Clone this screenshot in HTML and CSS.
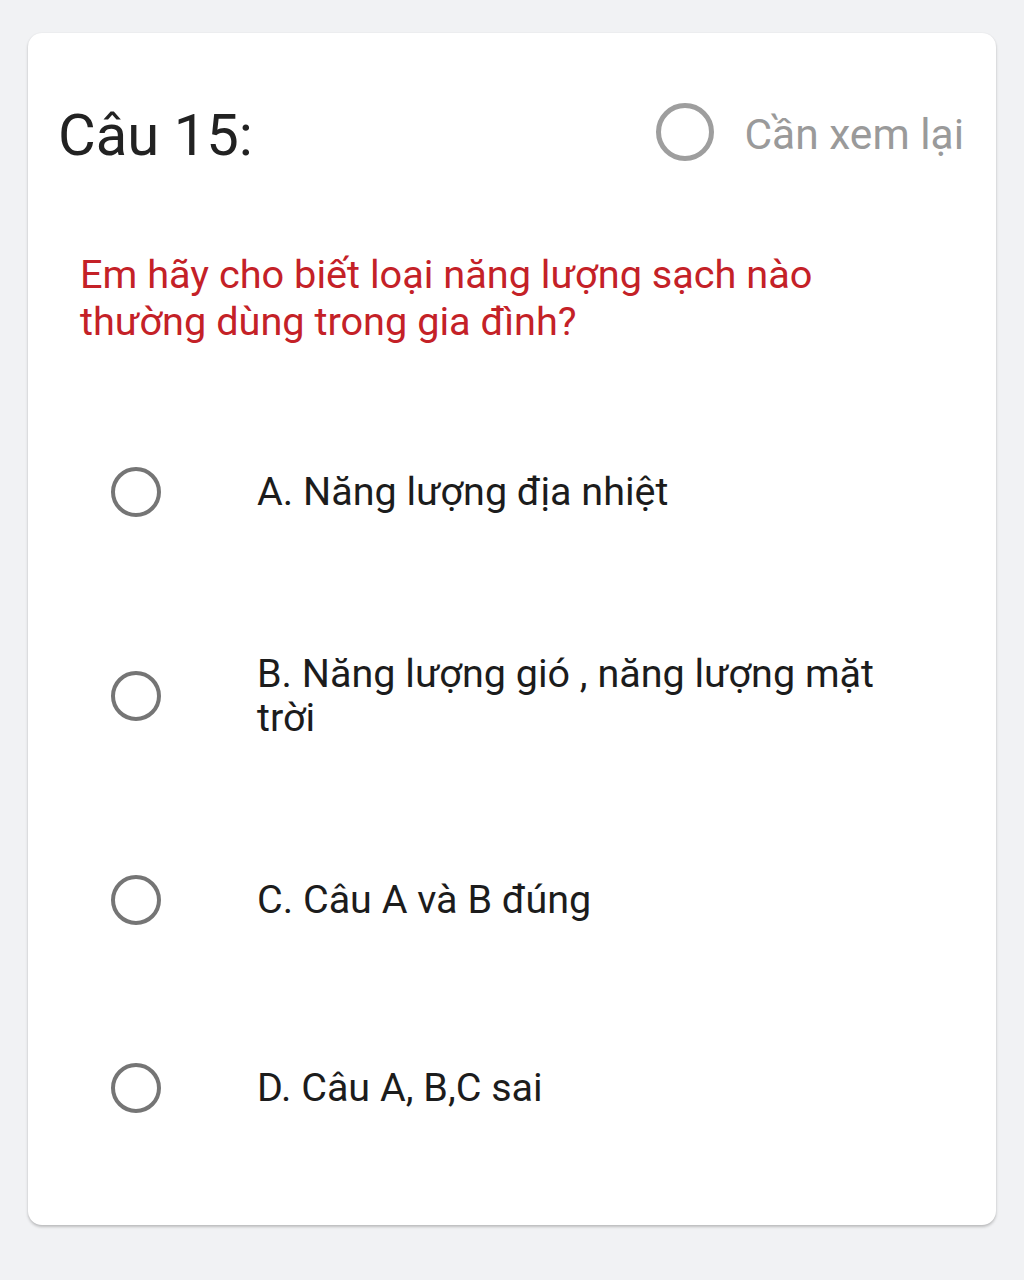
FILE: index.html
```html
<!DOCTYPE html>
<html lang="vi">
<head>
<meta charset="utf-8">
<title>Câu 15</title>
<link rel="stylesheet" href="styles.css">
</head>
<body>
<div class="card">
  <div class="header">
    <div class="title">Câu 15:</div>
    <div class="review">
      <span class="review-circle"></span>
      <span class="review-text">Cần xem lại</span>
    </div>
  </div>
  <div class="question">Em hãy cho biết loại năng lượng sạch nào thường dùng trong gia đình?</div>
  <div class="options">
    <div class="option">
      <span class="radio"></span>
      <span class="option-text">A. Năng lượng địa nhiệt</span>
    </div>
    <div class="option">
      <span class="radio"></span>
      <span class="option-text">B. Năng lượng gió , năng lượng mặt trời</span>
    </div>
    <div class="option">
      <span class="radio"></span>
      <span class="option-text">C. Câu A và B đúng</span>
    </div>
    <div class="option option-last">
      <span class="radio"></span>
      <span class="option-text">D. Câu A, B,C sai</span>
    </div>
  </div>
</div>
</body>
</html>
```
FILE: styles.css
```css
html, body {
  margin: 0;
  padding: 0;
  background: #f1f2f4;
}
body {
  font-family: Roboto, "Noto Sans", "Liberation Sans", sans-serif;
  padding: 33px 28px 0;
  height: 1280px;
  box-sizing: border-box;
}
.card {
  background: #ffffff;
  border-radius: 14px;
  height: 1192px;
  box-sizing: border-box;
  padding: 72px 32px 0 30px;
  box-shadow: 0 2px 3px rgba(0, 0, 0, 0.22), 0 0 2px rgba(0, 0, 0, 0.06);
}
.header {
  display: flex;
  justify-content: space-between;
  align-items: center;
  height: 60px;
}
.title {
  font-size: 58px;
  color: #222222;
  line-height: 60px;
}
.review {
  display: flex;
  align-items: center;
  gap: 30px;
}
.review-circle {
  width: 58px;
  height: 58px;
  box-sizing: border-box;
  border: 5px solid #9e9e9e;
  border-radius: 50%;
  margin-bottom: 6px;
}
.review-text {
  font-size: 42.5px;
  color: #9a9a9a;
  line-height: 60px;
}
.question {
  margin-top: 86px;
  padding-left: 22px;
  max-width: 770px;
  font-size: 39.7px;
  line-height: 47px;
  color: #c42127;
}
.options {
  margin-top: 122px;
  padding-left: 53px;
  display: flex;
  flex-direction: column;
  gap: 135px;
}
.option {
  display: flex;
  align-items: center;
  gap: 96px;
}
.option-last {
  margin-top: 3px;
}
.radio {
  flex: none;
  width: 50px;
  height: 50px;
  box-sizing: border-box;
  border: 4.5px solid #757575;
  border-radius: 50%;
}
.option-text {
  font-size: 39.5px;
  line-height: 44px;
  color: #1c1c1c;
  max-width: 650px;
}
```
